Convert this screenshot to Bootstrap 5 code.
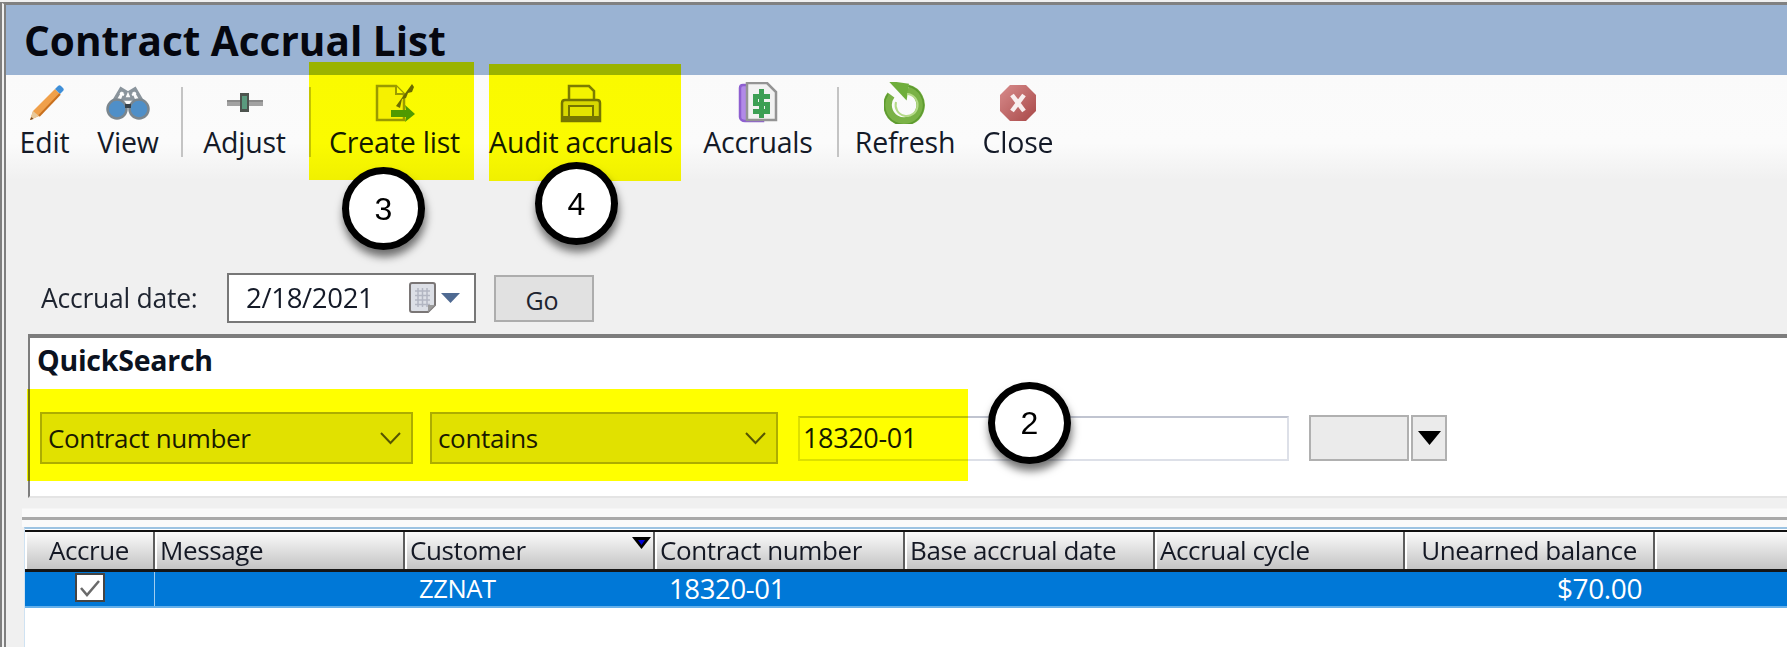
<!DOCTYPE html>
<html lang="en">
<head>
<meta charset="utf-8">
<title>Contract Accrual List</title>
<link href="https://cdn.jsdelivr.net/npm/bootstrap@5.3.0/dist/css/bootstrap.min.css" rel="stylesheet">
<style>
html,body{height:647px;overflow:hidden;background:#f0f0f0}
body{font-family:"Open Sans","Noto Sans",sans-serif;color:#1d1d1d;position:relative}
.app-shell{height:647px;border-left:6px double #7f7f7f;border-top:3px solid #808080;margin-top:2px;filter:blur(.6px);display:flex;flex-direction:column}
.title-bar{height:70px;background:#9ab3d3;padding-left:18px;font-size:40.500px;font-weight:700;line-height:72px;color:#05070f;flex:none}
.tool-bar{height:105px;flex:none;display:flex;background:linear-gradient(#fafafa,#fbfbfb 65%,#f0f0f0);font-size:28.500px;letter-spacing:-.2px}
.tool-btn{display:flex;flex-direction:column;align-items:center;height:100%;padding-top:7px;color:#141a28}
.tool-btn svg{height:42px;display:block}
.tool-btn span{line-height:38px;margin-top:-1px;white-space:nowrap}
.w77{width:77px}.w90{width:90px}.w107{width:107px}.w145{width:145px}.w228{width:228px}.w126{width:126px}.w100{width:100px}
.tool-sep{width:2px;height:70px;background:#c4c4c4;margin-top:12px}
.sep-a{margin-left:8px;margin-right:8px}.sep-b{margin-left:11px;margin-right:11px}.sep-c{margin-left:16px;margin-right:16px}
.date-row{padding:93px 0 0 35px;display:flex;align-items:flex-start;flex:none;font-size:26.500px}
.date-lbl{width:186px;line-height:50px;color:#1e2430;letter-spacing:-.25px}
.date-box{width:249px;height:50px;background:#fff;border:2px solid #777;display:flex;align-items:center;padding-left:17px;font-size:27.500px;letter-spacing:-.3px;color:#141a28}
.date-val{width:163px}
.go-btn{width:100px;height:47px;margin:2px 0 0 18px;background:#e1e1e1;border:2px solid #adadad;font-size:25px;line-height:46px;text-align:center;color:#1e2430;padding-right:4px}
.search-pane{margin:11px 0 0 22px;height:164px;background:#fff;border-top:4px solid #7d7d7d;border-left:2px solid #7d7d7d;border-bottom:2px solid #e4e4e4;flex:none;padding:0 0 0 7px}
.search-h{font-size:28.500px;font-weight:700;line-height:34px;padding-top:5px;height:74px;color:#0b1220;letter-spacing:-.25px}
.search-row{display:flex;align-items:center;height:52px;font-size:26px;letter-spacing:-.35px;color:#141a28}
.drop-box{height:52px;border:2px solid #adadad;background:#e1e1e1;display:flex;align-items:center;justify-content:space-between;padding:0 10px 0 6px;color:#1a1a1a}
.w373{width:373px;margin-left:3px}.w348{width:348px;margin-left:17px}
.text-box{width:491px;height:45px;margin-left:20px;border:2px solid #dde0e8;border-top-color:#c0c4d0;background:#fff;padding-left:3px;line-height:40px;font-size:27px}
.mini-drop{display:flex;height:46px;margin-left:20px}
.mini-l{width:100px;background:#ebebeb;border:2px solid #b0b0b0}
.mini-r{width:36px;margin-left:2px;background:#ebebeb;border:2px solid #b0b0b0;display:flex;align-items:center;justify-content:center}
.split-zone{height:29px;flex:none;margin-left:16px;padding-top:19px;background:linear-gradient(#f0f0f0 10px,#fafafa 11px)}
.split-zone i{display:block;height:3px;background:#a9a9a9}
.grid-pane{flex:1;margin-left:18px;background:#fff;border-top:2px solid #9cc3e2;border-left:1px solid #cfe2f2;padding-top:1px;min-height:0}
.grid-head,.grid-row{display:grid;grid-template-columns:130px repeat(6,250px) 1fr}
.grid-head{height:42px;border-top:2px solid #111;border-bottom:3px solid #151515;background:linear-gradient(#fbfbfb,#c3c3c3);font-size:26px;letter-spacing:-.4px;color:#141824}
.grid-head>div{position:relative;padding-left:5px;line-height:37px;border-right:2px solid #5d5d5d;box-shadow:inset 2px 0 0 #fff;white-space:nowrap}
.grid-head>div:last-child{border-right:0}
.grid-row{height:36px;background:#0078d7;border-bottom:2px solid #65b0ea;color:#fff;font-size:25.500px;letter-spacing:-.4px;line-height:33px}
.grid-row>div{padding-left:14px;white-space:nowrap}
.grid-row>.first-cell{border-right:1px solid #9fcdf0;padding:0;display:flex;justify-content:center}
.chk{width:30px;height:29px;background:#fff;border:2px solid #444;margin:1px 0 0 0;display:flex;align-items:center;justify-content:center}
.digit-cell{font-size:27.500px;letter-spacing:-.35px}
.cell-money{text-align:right;padding-right:13px!important;font-size:28px}
.hc{text-align:center;padding-left:0!important}
.sort-mark{position:absolute;right:2px;top:5px;display:block;line-height:0}
.hl{position:absolute;background:#ff0;mix-blend-mode:multiply}
.hl-a{left:309px;top:62px;width:165px;height:118px}
.hl-b{left:489px;top:64px;width:192px;height:117px}
.hl-c{left:27px;top:389px;width:941px;height:92px}
.call-out{position:absolute;width:83px;height:83px;border-radius:50%;background:#fff;border:7px solid #000;box-shadow:1px 7px 8px rgba(0,0,0,.55);font-family:"Liberation Sans",sans-serif;font-size:32px;color:#000;display:flex;align-items:center;justify-content:center}
.co-2{left:988px;top:382px;height:82px}
.co-3{left:342px;top:167px}
.co-4{left:535px;top:162px}
</style>
</head>
<body>
<div class="app-shell">
  <div class="title-bar">Contract Accrual List</div>
  <div class="tool-bar">
    <div class="tool-btn w77">
      <svg width="40" viewBox="0 0 40 42"><path d="M5 38l3-9L30 7l5 5-21 22z" fill="#f0a04a"/><path d="M8 29l6 5-9 4z" fill="#e8c89a"/><path d="M5 38l1.500-3 2 2z" fill="#7a4a20"/><path d="M30 7l3-3c1-1 2-1 3 0l2 2c1 1 1 2 0 3l-3 3z" fill="#3f8fd8"/><path d="M14 34L35 12" stroke="#c8701e" stroke-width="2"/></svg>
      <span>Edit</span>
    </div>
    <div class="tool-btn w90">
      <svg width="44" viewBox="0 0 44 42"><path d="M5 24L15 7l5 3-3 7h10l-3-7 5-3 10 17" fill="none" stroke="#8a949c" stroke-width="3.500"/><path d="M14 11l4 2M26 13l4-2" stroke="#fff" stroke-width="2"/><circle cx="11" cy="27" r="9.500" fill="#4f8fc8" stroke="#7b868e" stroke-width="2.500"/><circle cx="33" cy="27" r="9.500" fill="#4f8fc8" stroke="#7b868e" stroke-width="2.500"/><path d="M19 22h6v4h-6z" fill="#38424a"/></svg>
      <span>View</span>
    </div>
    <div class="tool-sep sep-a"></div>
    <div class="tool-btn w107">
      <svg width="38" viewBox="0 0 38 42"><path d="M1 18h36v6H1z" fill="#a2a2a2"/><path d="M1 18h36v2H1z" fill="#8a8a8a"/><path d="M14 11h9v19h-9z" fill="#4d544f"/><path d="M16 14h5v13h-5z" fill="#5a9a7e"/></svg>
      <span>Adjust</span>
    </div>
    <div class="tool-sep sep-b"></div>
    <div class="tool-btn w145">
      <svg width="42" viewBox="0 0 42 42"><path d="M3 4h19l8 8v26H3z" fill="#f6f1c0" stroke="#9a9a50" stroke-width="2.500"/><path d="M22 4v8h8" fill="#fff" stroke="#9a9a50" stroke-width="2"/><path d="M22 24L38 2l2 3-2 5-4 1-2 5-4 1-2 9z" fill="#6a6a30"/><path d="M17 28h15l-1-5 10 9-10 8 1-5H17z" fill="#4f9a2e"/></svg>
      <span>Create list</span>
    </div>
    <div class="tool-btn w228">
      <svg width="42" viewBox="0 0 42 42"><path d="M9 4h20l5 5v12H9z" fill="#f4f3c8" stroke="#7c7c40" stroke-width="2.500"/><path d="M2 21c0-2 1-3 3-3h32c2 0 3 1 3 3v18H2z" fill="#d8d890" stroke="#75753a" stroke-width="2.500"/><path d="M9 24h24v14H9z" fill="#e4e4a0" stroke="#75753a" stroke-width="2"/><path d="M3 34h36v5H3z" fill="#77773a"/></svg>
      <span>Audit accruals</span>
    </div>
    <div class="tool-btn w126">
      <svg width="42" viewBox="0 0 42 42"><path d="M3 6c0-2 1-3 3-3h20v36H8c-3 0-5-2-5-4z" fill="#b28ae8" stroke="#8e5fd0" stroke-width="2.500"/><path d="M10 1h20l9 9v28H10z" fill="#f2f2f2" stroke="#949494" stroke-width="2.500"/><path d="M16 12h17v5H21v3h12v12H16v-5h12v-3H16z" fill="#3c9f54"/><path d="M22 7h5v29h-5z" fill="#3c9f54"/></svg>
      <span>Accruals</span>
    </div>
    <div class="tool-sep sep-c"></div>
    <div class="tool-btn w100">
      <svg width="42" viewBox="0 0 42 42"><path d="M24 7a16.500 16.500 0 1 1-17 6" fill="none" stroke="#7ab246" stroke-width="8.500"/><path d="M24 4a19.500 19.500 0 1 1-20 8" fill="none" stroke="#5d9a30" stroke-width="1.500"/><path d="M3 0h21v17z" fill="#6fae3c" transform="rotate(8 12 8)"/><path d="M23 12a11 11 0 1 1-11 8" fill="none" stroke="#b4da88" stroke-width="2"/></svg>
      <span>Refresh</span>
    </div>
    <div class="tool-btn w126">
      <svg width="38" viewBox="0 0 38 42"><defs><linearGradient id="cg" x2="1" y2="1"><stop offset="0" stop-color="#d88c8c"/><stop offset="1" stop-color="#a84848"/></linearGradient></defs><path d="M11 3h16l10 10v16L27 39H11L1 29V13z" fill="url(#cg)"/><path d="M13 13l12 16M25 13L13 29" stroke="#f8eeee" stroke-width="4.500"/></svg>
      <span>Close</span>
    </div>
  </div>
  <div class="date-row">
    <div class="date-lbl">Accrual date:</div>
    <div class="date-box">
      <div class="date-val">2/18/2021</div>
      <svg width="52" height="32" viewBox="0 0 52 32"><path d="M3 1h21c1 0 2 1 2 2v20l-7 7H3c-1 0-2-1-2-2V3c0-1 1-2 2-2z" fill="#dcdfe6" stroke="#7a7676" stroke-width="2"/><path d="M6 9h15M6 13.500h15M6 18h15M6 22.500h15M9 6v19M13.500 6v19M18 6v19" stroke="#b2b6c2" stroke-width="1.500"/><path d="M19 30l7-7h-7z" fill="#9a9a9a"/><path d="M32 11h19l-9.500 10z" fill="#4f6a92"/></svg>
    </div>
    <div class="go-btn">Go</div>
  </div>
  <div class="search-pane">
    <div class="search-h">QuickSearch</div>
    <div class="search-row">
      <div class="drop-box w373">Contract number
        <svg width="21" height="13" viewBox="0 0 21 13"><path d="M1 1l9.500 10L20 1" fill="none" stroke="#555" stroke-width="2"/></svg></div>
      <div class="drop-box w348">contains
        <svg width="21" height="13" viewBox="0 0 21 13"><path d="M1 1l9.500 10L20 1" fill="none" stroke="#555" stroke-width="2"/></svg></div>
      <div class="text-box">18320-01</div>
      <div class="mini-drop">
        <div class="mini-l"></div>
        <div class="mini-r"><svg width="23" height="14" viewBox="0 0 23 14"><path d="M0 0h23L11.500 14z" fill="#000"/></svg></div>
      </div>
    </div>
  </div>
  <div class="split-zone"><i></i></div>
  <div class="grid-pane">
    <div class="grid-head">
      <div class="hc">Accrue</div>
      <div>Message</div>
      <div>Customer<b class="sort-mark"><svg width="19" height="12" viewBox="0 0 19 12"><path d="M0 0h19L9.500 12z" fill="#000"/><path d="M6 3h7l-3.500 5z" fill="#0000d8"/></svg></b></div>
      <div>Contract number</div>
      <div>Base accrual date</div>
      <div>Accrual cycle</div>
      <div class="hc">Unearned balance</div>
      <div></div>
    </div>
    <div class="grid-row">
      <div class="first-cell"><div class="chk"><svg width="22" height="18" viewBox="0 0 22 18"><path d="M2 9l6 7L20 2" fill="none" stroke="#6a6a6a" stroke-width="2.500"/></svg></div></div>
      <div></div>
      <div>ZZNAT</div>
      <div class="digit-cell">18320-01</div>
      <div></div>
      <div></div>
      <div class="cell-money">$70.00</div>
      <div></div>
    </div>
  </div>
</div>
<div class="hl hl-a"></div>
<div class="hl hl-b"></div>
<div class="hl hl-c"></div>
<div class="call-out co-2">2</div>
<div class="call-out co-3">3</div>
<div class="call-out co-4">4</div>
<script src="https://cdn.jsdelivr.net/npm/bootstrap@5.3.0/dist/js/bootstrap.bundle.min.js"></script>
</body>
</html>
